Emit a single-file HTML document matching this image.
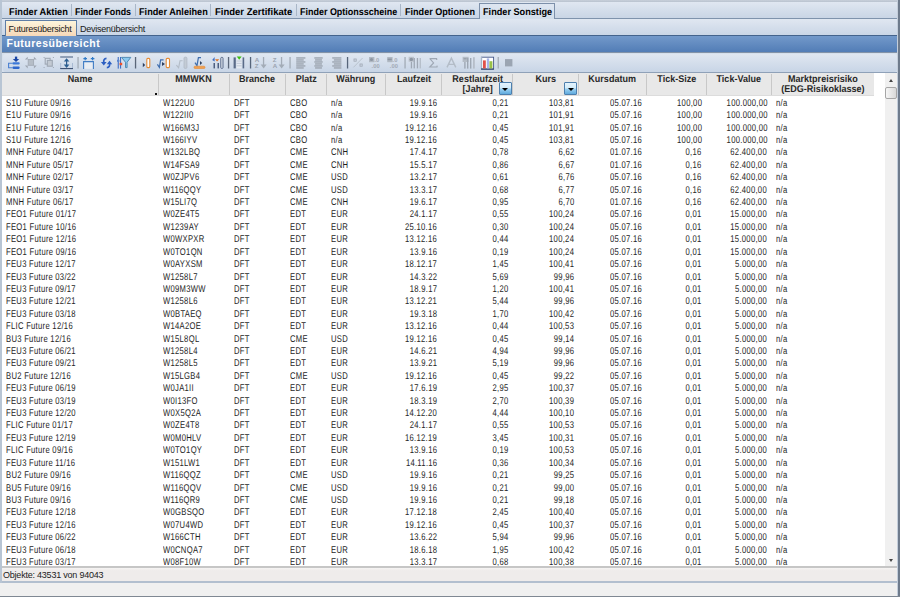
<!DOCTYPE html>
<html><head><meta charset="utf-8"><style>
*{margin:0;padding:0;box-sizing:border-box}
html,body{width:900px;height:597px;overflow:hidden;background:#f0f0f0;font-family:"Liberation Sans",sans-serif}
.a{position:absolute}
#top{position:absolute;left:0;top:0;width:900px;height:2px;background:linear-gradient(#c8d0da,#b9c3cf)}
#tabbar{position:absolute;left:0;top:2px;width:900px;height:17px;background:linear-gradient(#e0e7f1,#c9d5e5);border-bottom:1px solid #7f93ac}
.tt{position:absolute;top:7.3px;font-size:9.8px;font-weight:bold;color:#000;line-height:11px;white-space:nowrap;text-rendering:geometricPrecision;transform:scaleX(0.92);transform-origin:0 50%}
.tsep{position:absolute;top:4px;width:1px;height:12px;background:#a9b6c7}
#acttab{position:absolute;left:479px;top:3px;width:76px;height:16px;background:linear-gradient(#dee6f1,#d3deeb);border:1px solid #7d90aa;border-bottom:none}
#subbar{position:absolute;left:0;top:19px;width:900px;height:17px;background:linear-gradient(#e0e7f1,#cad6e6);border-bottom:1px solid #44638c}
#actsub{position:absolute;left:5px;top:20px;width:72px;height:16px;background:linear-gradient(#fdf5dc,#f7d8b8);border:1px solid #5f7ea6;border-bottom:none}
.st{position:absolute;top:23.8px;font-size:9px;line-height:11px;color:#202020;white-space:nowrap;letter-spacing:-0.25px}
#title{position:absolute;left:0;top:36px;width:900px;height:17px;background:linear-gradient(#7399ca,#527db6);border-bottom:1px solid #8393a8}
#titlet{position:absolute;left:6.5px;top:35.8px;font-size:10.5px;font-weight:bold;color:#fff;line-height:14px;letter-spacing:0.5px}
#tbar{position:absolute;left:0;top:53px;width:900px;height:20px;background:#d6e0ec;border-bottom:1px solid #8fa1b8}
#tpanel{position:absolute;left:3px;top:54px;width:894px;height:18px;border-radius:3px;background:linear-gradient(#e0e7f1,#c8d5e6)}
#hdr{position:absolute;left:2px;top:73px;width:871.5px;height:22.5px;background:#e8e8e8;border-bottom:1px solid #dcdcdc}
.h{position:absolute;top:75px;text-align:center;font-size:9.8px;font-weight:bold;line-height:10.2px;color:#282828;white-space:nowrap;text-rendering:geometricPrecision;transform:scaleX(0.92)}
.hs{position:absolute;top:74px;width:1px;height:21px;background:#c8c8c8}
#body{position:absolute;left:2px;top:73px;width:883px;height:493.5px;background:#fff}
.c{position:absolute;font-size:9.8px;line-height:12px;color:#1e1e1e;white-space:nowrap;letter-spacing:0.37px;text-rendering:geometricPrecision;transform:scaleX(0.78);transform-origin:0 50%}
.c.r{transform-origin:100% 50%}
.r{text-align:right}
#lb{position:absolute;left:0;top:0;width:2px;height:583px;background:#b8c5d4}
#rb{position:absolute;left:897px;top:0;width:3px;height:597px;background:linear-gradient(90deg,#c4cedb 0,#c4cedb 25%,#6e7b8c 45%,#6e7b8c 100%)}
#sb{position:absolute;left:885px;top:73px;width:12px;height:493px;background:#f0f0f0}
#thumb{position:absolute;left:885.2px;top:87.2px;width:11.6px;height:11.5px;border:1px solid #a6a6a6;border-radius:2px;background:linear-gradient(90deg,#f6f6f6,#d8d8d8)}
#tline{position:absolute;left:2px;top:566.4px;width:895px;height:1.8px;background:#c6c6c6}
#status{position:absolute;left:2px;top:568.2px;width:895px;height:15px;background:linear-gradient(#f6f4f3,#efeceb 20%);border-bottom:2px solid #b2bfcf}
#statt{position:absolute;left:3px;top:570px;font-size:9px;line-height:11px;color:#222;letter-spacing:-0.22px}
#bline{position:absolute;left:0;top:595.5px;width:900px;height:1.5px;background:#7f8893}
.dd{position:absolute;top:82px;width:12.8px;height:12.8px;border:1px solid #4d7fae;border-radius:1px;background:linear-gradient(#e4f3fc 0,#d3ebf9 45%,#9bd0f1 55%,#5faadd 100%)}
.dd:after{content:"";position:absolute;left:2.6px;top:4.6px;border-left:3px solid transparent;border-right:3px solid transparent;border-top:3.6px solid #000}
</style></head><body>
<div id="top"></div>
<div id="tabbar"></div>
<div class="tt" style="left:8.5px;transform:scaleX(0.945)">Finder Aktien</div><div class="tsep" style="left:70.8px"></div><div class="tt" style="left:75px;transform:scaleX(0.902)">Finder Fonds</div><div class="tsep" style="left:134.8px"></div><div class="tt" style="left:139px;transform:scaleX(0.934)">Finder Anleihen</div><div class="tsep" style="left:209.8px"></div><div class="tt" style="left:215px;transform:scaleX(0.971)">Finder Zertifikate</div><div class="tsep" style="left:295.5px"></div><div class="tt" style="left:299.5px;transform:scaleX(0.915)">Finder Optionsscheine</div><div class="tsep" style="left:400.4px"></div><div class="tt" style="left:404.5px;transform:scaleX(0.926)">Finder Optionen</div>
<div id="acttab"></div>
<div id="subbar"></div>
<div id="acttab2"></div>
<div class="tt" style="left:482.5px;transform:scaleX(0.934)">Finder Sonstige</div>
<div id="actsub"></div>
<div class="st" style="left:8.5px">Futuresübersicht</div>
<div class="st" style="left:80px">Devisenübersicht</div>
<div id="title"></div>
<div id="titlet">Futuresübersicht</div>
<div id="tbar"></div>
<div id="tpanel"></div>
<svg class="a" style="left:0;top:0" width="900" height="75" viewBox="0 0 900 75">
<rect x="14.9" y="56.6" width="2.3" height="2.6" fill="#1a47a6"/>
<path d="M12.8 59 L19.2 59 L16 62 Z" fill="#1a47a6"/>
<rect x="12.4" y="62.2" width="7.3" height="2.3" rx="1.1" fill="#3b78d8"/>
<rect x="12.4" y="66.6" width="7.3" height="2.3" rx="1.1" fill="#2d66cc"/>
<path d="M12.6 63.3 H8.6 V67.7 H12.6" fill="none" stroke="#4a7fd0" stroke-width="1.1"/>

<rect x="28.2" y="59.5" width="5.4" height="5.8" fill="#b5bdc7" stroke="#a3abb6" stroke-width="0.9"/>
<path d="M24.9 59.6 L27.7 56.8 L27.7 59.6 Z M36.7 59.6 L33.9 56.8 L33.9 59.6 Z M24.9 65.6 L27.7 68.4 L27.7 65.6 Z M36.7 65.6 L33.9 68.4 L33.9 65.6 Z" fill="#9ea6b1"/>

<rect x="45.2" y="58.3" width="4.9" height="5.8" fill="none" stroke="#9ea7b3" stroke-width="1.1"/>
<rect x="47.3" y="60.4" width="5" height="5.8" fill="#c3cad3" stroke="#9ea7b3" stroke-width="1.1"/>
<rect x="43.6" y="57" width="1" height="1" fill="#9ea7b3"/><rect x="52.9" y="57" width="1" height="1" fill="#9ea7b3"/>
<rect x="43.6" y="67" width="1" height="1" fill="#9ea7b3"/><rect x="52.9" y="67" width="1" height="1" fill="#9ea7b3"/>

<rect x="60.2" y="56.1" width="12.8" height="1.8" fill="#8797b0"/>
<path d="M60.7 63 V68.6 H72.5 V63" fill="none" stroke="#a9bad3" stroke-width="1"/>
<rect x="60.2" y="68" width="12.8" height="1.1" fill="#3f5274"/>
<rect x="66" y="60" width="1.2" height="6" fill="#2f5b8c"/>
<path d="M63.8 61.6 L66.6 58.2 L69.4 61.6 Z M63.8 64.6 L66.6 68 L69.4 64.6 Z" fill="#2c5f92"/>
<rect x="77.4" y="57" width="1.3" height="11.5" fill="#a2abb6"/>
<rect x="83.6" y="61.6" width="9.8" height="7.2" fill="#e9edf3"/><path d="M83.6 69 V61.6 H93.4 V69" fill="none" stroke="#3f7cc4" stroke-width="1.1"/>
<path d="M83.4 58.6 H87 M85.2 57 V60.2 M90.8 58.6 H94.4 M92.6 57 V60.2" stroke="#2f7ac8" stroke-width="1.2"/>

<path d="M106.5 58.3 C104.2 58.5 103.4 60.2 103.8 62.5" fill="none" stroke="#2c5fc2" stroke-width="1.7"/>
<path d="M100.9 62 L106.6 62 L103.8 65.4 Z" fill="#2c5fc2"/>
<path d="M106.8 67.6 C109.2 67.4 110 65.6 109.6 63.5" fill="none" stroke="#2c5fc2" stroke-width="1.7"/>
<path d="M106.8 64.2 L112.2 64.2 L109.6 60.8 Z" fill="#2c5fc2"/>

<rect x="117.7" y="57" width="1.1" height="11.6" fill="#3f6fc4"/>
<rect x="120" y="57" width="1.1" height="11.6" fill="#3f6fc4"/>
<rect x="117" y="59.8" width="2.4" height="2" fill="#5a86d0"/>
<rect x="119.6" y="62.8" width="2.6" height="2.4" fill="#f0502a"/>
<path d="M121.5 57.4 H130.8 L127.1 62.2 V67.6 H125.5 V62.2 Z" fill="#8ccaf0" stroke="#4a86b0" stroke-width="0.9"/>
<rect x="134.9" y="57" width="1.3" height="11.5" fill="#5a6678"/>
<path d="M142.8 62.8 L145.2 65 L142.8 67.2 Z" fill="#2e3f5e"/>
<rect x="146.8" y="58.4" width="3" height="9.2" rx="1" fill="#fff" stroke="#e58c36" stroke-width="1.1"/>

<path d="M157.4 64.4 L159.4 67.4 L160.6 59.8 H163.6" fill="none" stroke="#3f6eae" stroke-width="1.2"/>
<path d="M162 62 L165 64 L162 66 Z" fill="#2e3f5e"/>
<rect x="166.2" y="58.4" width="3.3" height="9.2" rx="1" fill="#fff" stroke="#e58c36" stroke-width="1.1"/>

<path d="M176.4 65.2 L178.6 67.8 L180 60.8 H182.6" fill="none" stroke="#b3bcc7" stroke-width="1.1"/>
<rect x="184" y="57.2" width="2.9" height="11.2" rx="1" fill="#c3cbd5" stroke="#b0b9c5" stroke-width="0.8"/>

<path d="M195 62.6 L197 65.6 L198.4 57.6 H201" fill="none" stroke="#3f6eae" stroke-width="1.2"/>
<path d="M200 61 L202.2 63 L200 65 Z" fill="#2e3f5e"/>
<rect x="194" y="66.2" width="11" height="2.3" rx="1" fill="#f0a050" stroke="#e58c36" stroke-width="0.6"/>

<rect x="213.5" y="63" width="1.5" height="5.4" fill="#4d5f80"/>
<rect x="217.5" y="63" width="1.5" height="5.4" fill="#4d5f80"/>
<rect x="220.8" y="57.4" width="2.2" height="11" rx="0.8" fill="#dfe5ee" stroke="#4d5f80" stroke-width="0.9"/>
<path d="M212.2 60 L214.6 57 L214.6 61.4 Z" fill="#3f6fc4"/>
<path d="M215 59.2 H219.2 L217.1 61.4 Z" fill="#e07020"/>
<rect x="227.9" y="57" width="1.3" height="11.5" fill="#5a6678"/>
<rect x="233.6" y="57.4" width="2.2" height="11" fill="#5a6b88"/>
<rect x="236.6" y="58" width="5" height="10.4" fill="#e6ebf2"/>
<path d="M236.6 61 H241.6 M236.6 63.4 H241.6 M236.6 65.8 H241.6" stroke="#b7c2d0" stroke-width="0.8"/>
<rect x="242.6" y="57.4" width="1.6" height="11" fill="#5a6b88"/>
<path d="M236.8 56.4 H241.6 L239.2 59.8 Z" fill="#3cc010"/>
<rect x="249.9" y="57" width="1.3" height="11.5" fill="#56657a"/>
<text x="254.8" y="61.8" font-family="Liberation Sans" font-size="6.2" font-weight="bold" fill="#9aa3ae">A</text>
<text x="254.8" y="68" font-family="Liberation Sans" font-size="6.2" font-weight="bold" fill="#9aa3ae">Z</text>
<rect x="262.9" y="57" width="1.3" height="9" fill="#a3acb7"/>
<path d="M260.6 64.6 H266.6 L263.6 68.4 Z" fill="#a3acb7"/>

<text x="272.8" y="61.8" font-family="Liberation Sans" font-size="6.2" font-weight="bold" fill="#9aa3ae">Z</text>
<text x="272.8" y="68" font-family="Liberation Sans" font-size="6.2" font-weight="bold" fill="#9aa3ae">A</text>
<rect x="280.9" y="57" width="1.3" height="9" fill="#a3acb7"/>
<path d="M278.6 64.6 H284.6 L281.6 68.4 Z" fill="#a3acb7"/>
<rect x="289.4" y="57" width="1.3" height="11.5" fill="#a2abb6"/><rect x="296.20" y="57.2" width="9.20" height="1.5" fill="#a0a9b4"/><rect x="296.20" y="59.2" width="7.54" height="1.5" fill="#a0a9b4"/><rect x="296.20" y="61.2" width="9.20" height="1.5" fill="#a0a9b4"/><rect x="296.20" y="63.2" width="7.54" height="1.5" fill="#a0a9b4"/><rect x="296.20" y="65.2" width="9.20" height="1.5" fill="#a0a9b4"/><rect x="296.20" y="67.2" width="7.54" height="1.5" fill="#a0a9b4"/><rect x="314.30" y="57.2" width="8.40" height="1.5" fill="#a0a9b4"/><rect x="315.06" y="59.2" width="6.89" height="1.5" fill="#a0a9b4"/><rect x="314.30" y="61.2" width="8.40" height="1.5" fill="#a0a9b4"/><rect x="315.06" y="63.2" width="6.89" height="1.5" fill="#a0a9b4"/><rect x="314.30" y="65.2" width="8.40" height="1.5" fill="#a0a9b4"/><rect x="315.06" y="67.2" width="6.89" height="1.5" fill="#a0a9b4"/><rect x="332.20" y="57.2" width="9.20" height="1.5" fill="#a0a9b4"/><rect x="333.86" y="59.2" width="7.54" height="1.5" fill="#a0a9b4"/><rect x="332.20" y="61.2" width="9.20" height="1.5" fill="#a0a9b4"/><rect x="333.86" y="63.2" width="7.54" height="1.5" fill="#a0a9b4"/><rect x="332.20" y="65.2" width="9.20" height="1.5" fill="#a0a9b4"/><rect x="333.86" y="67.2" width="7.54" height="1.5" fill="#a0a9b4"/><rect x="346.9" y="57" width="1.3" height="11.5" fill="#56657a"/>
<rect x="354" y="59" width="2.2" height="2.2" fill="none" stroke="#9ea7b3" stroke-width="0.8"/>
<rect x="360" y="64" width="2.2" height="2.2" fill="none" stroke="#9ea7b3" stroke-width="0.8"/>
<path d="M353.4 67.4 L362.6 58" stroke="#b3bcc7" stroke-width="0.8"/>

<rect x="369" y="57" width="5.4" height="5.2" fill="#b0b8c2"/>
<circle cx="371.5" cy="59.5" r="1.6" fill="#8e97a3"/>
<text x="374.4" y="62.2" font-family="Liberation Sans" font-size="5.8" font-weight="bold" fill="#a3abb6">.0</text>
<text x="371.6" y="68.4" font-family="Liberation Sans" font-size="5.8" font-weight="bold" fill="#a3abb6">.00</text>

<rect x="387.2" y="57" width="5.4" height="5.2" fill="#b0b8c2"/>
<rect x="387.6" y="58.6" width="4.2" height="1.6" fill="#8e97a3"/>
<text x="392.59999999999997" y="62.2" font-family="Liberation Sans" font-size="5.8" font-weight="bold" fill="#a3abb6">.0</text>
<text x="389.8" y="68.4" font-family="Liberation Sans" font-size="5.8" font-weight="bold" fill="#a3abb6">.00</text>
<rect x="404.4" y="57" width="1.3" height="11.5" fill="#a2abb6"/>
<rect x="408.6" y="56.8" width="5.4" height="5" fill="#bdc4cd"/>
<circle cx="411.3" cy="59.5" r="1.8" fill="#8e97a3"/>
<rect x="410.8" y="62" width="1.3" height="6.4" fill="#9ea7b3"/>
<rect x="413.6" y="58" width="1.3" height="10.4" fill="#9ea7b3"/>
<rect x="416.8" y="58" width="1.3" height="10.4" fill="#9ea7b3"/>
<rect x="419.6" y="58" width="1.3" height="10.4" fill="#b3bcc7"/>
<path d="M429.6 58.6 H436.6 L436.8 60 M429.8 58.6 L433.6 63 L429.8 67 H437 L437.2 65.6" fill="none" stroke="#9ea7b3" stroke-width="1.1"/><path d="M447 67.4 L451.4 58.2 L455.8 67.4 M448.8 64.4 H454" fill="none" stroke="#b3bcc7" stroke-width="1.4"/>
<rect x="462.6" y="56.8" width="6" height="5.2" fill="#b4bcc6"/>
<rect x="463.6" y="58" width="3" height="1.4" fill="#9aa3ae"/>
<rect x="464.2" y="62" width="1.4" height="6.6" fill="#9ea7b3"/>
<rect x="467" y="58" width="1.4" height="10.6" fill="#9ea7b3"/>
<rect x="470" y="58" width="1.4" height="10.6" fill="#9ea7b3"/>
<rect x="473" y="57.2" width="1.8" height="11.4" fill="#b6bec9"/>

<rect x="481.4" y="57.2" width="12.2" height="12" fill="#fff" stroke="#46598a" stroke-width="0.9"/>
<rect x="481" y="57" width="1.2" height="12.4" fill="#a7b4c8"/>
<rect x="481" y="68.4" width="12.8" height="1.2" fill="#33466e"/>
<rect x="483" y="60.4" width="2.8" height="8" fill="#e0504a"/>
<rect x="486.8" y="58.4" width="2.4" height="10" fill="#a8b4e8"/>
<rect x="489.4" y="61.2" width="3" height="7.2" fill="#98c048"/>
<rect x="497.59999999999997" y="57" width="1.3" height="11.5" fill="#a2abb6"/><rect x="505" y="59.1" width="7.4" height="7.3" fill="#9ba5b2"/></svg>
<div id="body"></div>
<div id="hdr"></div>
<div class="h" style="left:2px;width:156.3px">Name</div><div class="h" style="left:158.3px;width:71.1px">MMWKN</div><div class="hs" style="left:157.8px"></div><div class="h" style="left:229.4px;width:56.2px">Branche</div><div class="hs" style="left:228.9px"></div><div class="h" style="left:285.6px;width:40.6px">Platz</div><div class="hs" style="left:285.1px"></div><div class="h" style="left:326.2px;width:59.4px">Währung</div><div class="hs" style="left:325.7px"></div><div class="h" style="left:385.6px;width:56px">Laufzeit</div><div class="hs" style="left:385.1px"></div><div class="h" style="left:441.6px;width:71.3px">Restlaufzeit<br>[Jahre]</div><div class="hs" style="left:441.1px"></div><div class="h" style="left:512.9px;width:65.5px">Kurs</div><div class="hs" style="left:512.4px"></div><div class="h" style="left:578.4px;width:68.3px">Kursdatum</div><div class="hs" style="left:577.9px"></div><div class="h" style="left:646.7px;width:59.5px">Tick-Size</div><div class="hs" style="left:646.2px"></div><div class="h" style="left:706.2px;width:65.5px">Tick-Value</div><div class="hs" style="left:705.7px"></div><div class="h" style="left:771.7px;width:101.8px">Marktpreisrisiko<br>(EDG-Risikoklasse)</div><div class="hs" style="left:771.2px"></div>
<div class="dd" style="left:498.9px"></div>
<div class="dd" style="left:564.2px"></div>
<div class="a" style="left:155.2px;top:92.6px;width:2.2px;height:2.2px;background:#111"></div>
<div class="c" style="top:97.7px;left:5.8px">S1U Future 09/16</div><div class="c" style="top:97.7px;left:163.1px">W122U0</div><div class="c" style="top:97.7px;left:234px">DFT</div><div class="c" style="top:97.7px;left:289.9px">CBO</div><div class="c" style="top:97.7px;left:330.8px">n/a</div><div class="c r" style="top:97.7px;right:462.7px">19.9.16</div><div class="c r" style="top:97.7px;right:391.4px">0,21</div><div class="c r" style="top:97.7px;right:325.9px">103,81</div><div class="c r" style="top:97.7px;right:257.6px">05.07.16</div><div class="c r" style="top:97.7px;right:198.1px">100,00</div><div class="c r" style="top:97.7px;right:132.6px">100.000,00</div><div class="c" style="top:97.7px;left:775.8px">n/a</div><div class="c" style="top:110.12px;left:5.8px">E1U Future 09/16</div><div class="c" style="top:110.12px;left:163.1px">W122II0</div><div class="c" style="top:110.12px;left:234px">DFT</div><div class="c" style="top:110.12px;left:289.9px">CBO</div><div class="c" style="top:110.12px;left:330.8px">n/a</div><div class="c r" style="top:110.12px;right:462.7px">19.9.16</div><div class="c r" style="top:110.12px;right:391.4px">0,21</div><div class="c r" style="top:110.12px;right:325.9px">101,91</div><div class="c r" style="top:110.12px;right:257.6px">05.07.16</div><div class="c r" style="top:110.12px;right:198.1px">100,00</div><div class="c r" style="top:110.12px;right:132.6px">100.000,00</div><div class="c" style="top:110.12px;left:775.8px">n/a</div><div class="c" style="top:122.53px;left:5.8px">E1U Future 12/16</div><div class="c" style="top:122.53px;left:163.1px">W166M3J</div><div class="c" style="top:122.53px;left:234px">DFT</div><div class="c" style="top:122.53px;left:289.9px">CBO</div><div class="c" style="top:122.53px;left:330.8px">n/a</div><div class="c r" style="top:122.53px;right:462.7px">19.12.16</div><div class="c r" style="top:122.53px;right:391.4px">0,45</div><div class="c r" style="top:122.53px;right:325.9px">101,91</div><div class="c r" style="top:122.53px;right:257.6px">05.07.16</div><div class="c r" style="top:122.53px;right:198.1px">100,00</div><div class="c r" style="top:122.53px;right:132.6px">100.000,00</div><div class="c" style="top:122.53px;left:775.8px">n/a</div><div class="c" style="top:134.94px;left:5.8px">S1U Future 12/16</div><div class="c" style="top:134.94px;left:163.1px">W166IYV</div><div class="c" style="top:134.94px;left:234px">DFT</div><div class="c" style="top:134.94px;left:289.9px">CBO</div><div class="c" style="top:134.94px;left:330.8px">n/a</div><div class="c r" style="top:134.94px;right:462.7px">19.12.16</div><div class="c r" style="top:134.94px;right:391.4px">0,45</div><div class="c r" style="top:134.94px;right:325.9px">103,81</div><div class="c r" style="top:134.94px;right:257.6px">05.07.16</div><div class="c r" style="top:134.94px;right:198.1px">100,00</div><div class="c r" style="top:134.94px;right:132.6px">100.000,00</div><div class="c" style="top:134.94px;left:775.8px">n/a</div><div class="c" style="top:147.36px;left:5.8px">MNH Future 04/17</div><div class="c" style="top:147.36px;left:163.1px">W132LBQ</div><div class="c" style="top:147.36px;left:234px">DFT</div><div class="c" style="top:147.36px;left:289.9px">CME</div><div class="c" style="top:147.36px;left:330.8px">CNH</div><div class="c r" style="top:147.36px;right:462.7px">17.4.17</div><div class="c r" style="top:147.36px;right:391.4px">0,78</div><div class="c r" style="top:147.36px;right:325.9px">6,62</div><div class="c r" style="top:147.36px;right:257.6px">01.07.16</div><div class="c r" style="top:147.36px;right:198.1px">0,16</div><div class="c r" style="top:147.36px;right:132.6px">62.400,00</div><div class="c" style="top:147.36px;left:775.8px">n/a</div><div class="c" style="top:159.78px;left:5.8px">MNH Future 05/17</div><div class="c" style="top:159.78px;left:163.1px">W14FSA9</div><div class="c" style="top:159.78px;left:234px">DFT</div><div class="c" style="top:159.78px;left:289.9px">CME</div><div class="c" style="top:159.78px;left:330.8px">CNH</div><div class="c r" style="top:159.78px;right:462.7px">15.5.17</div><div class="c r" style="top:159.78px;right:391.4px">0,86</div><div class="c r" style="top:159.78px;right:325.9px">6,67</div><div class="c r" style="top:159.78px;right:257.6px">01.07.16</div><div class="c r" style="top:159.78px;right:198.1px">0,16</div><div class="c r" style="top:159.78px;right:132.6px">62.400,00</div><div class="c" style="top:159.78px;left:775.8px">n/a</div><div class="c" style="top:172.19px;left:5.8px">MNH Future 02/17</div><div class="c" style="top:172.19px;left:163.1px">W0ZJPV6</div><div class="c" style="top:172.19px;left:234px">DFT</div><div class="c" style="top:172.19px;left:289.9px">CME</div><div class="c" style="top:172.19px;left:330.8px">USD</div><div class="c r" style="top:172.19px;right:462.7px">13.2.17</div><div class="c r" style="top:172.19px;right:391.4px">0,61</div><div class="c r" style="top:172.19px;right:325.9px">6,76</div><div class="c r" style="top:172.19px;right:257.6px">05.07.16</div><div class="c r" style="top:172.19px;right:198.1px">0,16</div><div class="c r" style="top:172.19px;right:132.6px">62.400,00</div><div class="c" style="top:172.19px;left:775.8px">n/a</div><div class="c" style="top:184.61px;left:5.8px">MNH Future 03/17</div><div class="c" style="top:184.61px;left:163.1px">W116QQY</div><div class="c" style="top:184.61px;left:234px">DFT</div><div class="c" style="top:184.61px;left:289.9px">CME</div><div class="c" style="top:184.61px;left:330.8px">USD</div><div class="c r" style="top:184.61px;right:462.7px">13.3.17</div><div class="c r" style="top:184.61px;right:391.4px">0,68</div><div class="c r" style="top:184.61px;right:325.9px">6,77</div><div class="c r" style="top:184.61px;right:257.6px">05.07.16</div><div class="c r" style="top:184.61px;right:198.1px">0,16</div><div class="c r" style="top:184.61px;right:132.6px">62.400,00</div><div class="c" style="top:184.61px;left:775.8px">n/a</div><div class="c" style="top:197.02px;left:5.8px">MNH Future 06/17</div><div class="c" style="top:197.02px;left:163.1px">W15LI7Q</div><div class="c" style="top:197.02px;left:234px">DFT</div><div class="c" style="top:197.02px;left:289.9px">CME</div><div class="c" style="top:197.02px;left:330.8px">CNH</div><div class="c r" style="top:197.02px;right:462.7px">19.6.17</div><div class="c r" style="top:197.02px;right:391.4px">0,95</div><div class="c r" style="top:197.02px;right:325.9px">6,70</div><div class="c r" style="top:197.02px;right:257.6px">01.07.16</div><div class="c r" style="top:197.02px;right:198.1px">0,16</div><div class="c r" style="top:197.02px;right:132.6px">62.400,00</div><div class="c" style="top:197.02px;left:775.8px">n/a</div><div class="c" style="top:209.44px;left:5.8px">FEO1 Future 01/17</div><div class="c" style="top:209.44px;left:163.1px">W0ZE4T5</div><div class="c" style="top:209.44px;left:234px">DFT</div><div class="c" style="top:209.44px;left:289.9px">EDT</div><div class="c" style="top:209.44px;left:330.8px">EUR</div><div class="c r" style="top:209.44px;right:462.7px">24.1.17</div><div class="c r" style="top:209.44px;right:391.4px">0,55</div><div class="c r" style="top:209.44px;right:325.9px">100,24</div><div class="c r" style="top:209.44px;right:257.6px">05.07.16</div><div class="c r" style="top:209.44px;right:198.1px">0,01</div><div class="c r" style="top:209.44px;right:132.6px">15.000,00</div><div class="c" style="top:209.44px;left:775.8px">n/a</div><div class="c" style="top:221.85px;left:5.8px">FEO1 Future 10/16</div><div class="c" style="top:221.85px;left:163.1px">W1239AY</div><div class="c" style="top:221.85px;left:234px">DFT</div><div class="c" style="top:221.85px;left:289.9px">EDT</div><div class="c" style="top:221.85px;left:330.8px">EUR</div><div class="c r" style="top:221.85px;right:462.7px">25.10.16</div><div class="c r" style="top:221.85px;right:391.4px">0,30</div><div class="c r" style="top:221.85px;right:325.9px">100,24</div><div class="c r" style="top:221.85px;right:257.6px">05.07.16</div><div class="c r" style="top:221.85px;right:198.1px">0,01</div><div class="c r" style="top:221.85px;right:132.6px">15.000,00</div><div class="c" style="top:221.85px;left:775.8px">n/a</div><div class="c" style="top:234.26px;left:5.8px">FEO1 Future 12/16</div><div class="c" style="top:234.26px;left:163.1px">W0WXPXR</div><div class="c" style="top:234.26px;left:234px">DFT</div><div class="c" style="top:234.26px;left:289.9px">EDT</div><div class="c" style="top:234.26px;left:330.8px">EUR</div><div class="c r" style="top:234.26px;right:462.7px">13.12.16</div><div class="c r" style="top:234.26px;right:391.4px">0,44</div><div class="c r" style="top:234.26px;right:325.9px">100,24</div><div class="c r" style="top:234.26px;right:257.6px">05.07.16</div><div class="c r" style="top:234.26px;right:198.1px">0,01</div><div class="c r" style="top:234.26px;right:132.6px">15.000,00</div><div class="c" style="top:234.26px;left:775.8px">n/a</div><div class="c" style="top:246.68px;left:5.8px">FEO1 Future 09/16</div><div class="c" style="top:246.68px;left:163.1px">W0TO1QN</div><div class="c" style="top:246.68px;left:234px">DFT</div><div class="c" style="top:246.68px;left:289.9px">EDT</div><div class="c" style="top:246.68px;left:330.8px">EUR</div><div class="c r" style="top:246.68px;right:462.7px">13.9.16</div><div class="c r" style="top:246.68px;right:391.4px">0,19</div><div class="c r" style="top:246.68px;right:325.9px">100,24</div><div class="c r" style="top:246.68px;right:257.6px">05.07.16</div><div class="c r" style="top:246.68px;right:198.1px">0,01</div><div class="c r" style="top:246.68px;right:132.6px">15.000,00</div><div class="c" style="top:246.68px;left:775.8px">n/a</div><div class="c" style="top:259.09px;left:5.8px">FEU3 Future 12/17</div><div class="c" style="top:259.09px;left:163.1px">W0AYXSM</div><div class="c" style="top:259.09px;left:234px">DFT</div><div class="c" style="top:259.09px;left:289.9px">EDT</div><div class="c" style="top:259.09px;left:330.8px">EUR</div><div class="c r" style="top:259.09px;right:462.7px">18.12.17</div><div class="c r" style="top:259.09px;right:391.4px">1,45</div><div class="c r" style="top:259.09px;right:325.9px">100,41</div><div class="c r" style="top:259.09px;right:257.6px">05.07.16</div><div class="c r" style="top:259.09px;right:198.1px">0,01</div><div class="c r" style="top:259.09px;right:132.6px">5.000,00</div><div class="c" style="top:259.09px;left:775.8px">n/a</div><div class="c" style="top:271.51px;left:5.8px">FEU3 Future 03/22</div><div class="c" style="top:271.51px;left:163.1px">W1258L7</div><div class="c" style="top:271.51px;left:234px">DFT</div><div class="c" style="top:271.51px;left:289.9px">EDT</div><div class="c" style="top:271.51px;left:330.8px">EUR</div><div class="c r" style="top:271.51px;right:462.7px">14.3.22</div><div class="c r" style="top:271.51px;right:391.4px">5,69</div><div class="c r" style="top:271.51px;right:325.9px">99,96</div><div class="c r" style="top:271.51px;right:257.6px">05.07.16</div><div class="c r" style="top:271.51px;right:198.1px">0,01</div><div class="c r" style="top:271.51px;right:132.6px">5.000,00</div><div class="c" style="top:271.51px;left:775.8px">n/a</div><div class="c" style="top:283.93px;left:5.8px">FEU3 Future 09/17</div><div class="c" style="top:283.93px;left:163.1px">W09M3WW</div><div class="c" style="top:283.93px;left:234px">DFT</div><div class="c" style="top:283.93px;left:289.9px">EDT</div><div class="c" style="top:283.93px;left:330.8px">EUR</div><div class="c r" style="top:283.93px;right:462.7px">18.9.17</div><div class="c r" style="top:283.93px;right:391.4px">1,20</div><div class="c r" style="top:283.93px;right:325.9px">100,41</div><div class="c r" style="top:283.93px;right:257.6px">05.07.16</div><div class="c r" style="top:283.93px;right:198.1px">0,01</div><div class="c r" style="top:283.93px;right:132.6px">5.000,00</div><div class="c" style="top:283.93px;left:775.8px">n/a</div><div class="c" style="top:296.34px;left:5.8px">FEU3 Future 12/21</div><div class="c" style="top:296.34px;left:163.1px">W1258L6</div><div class="c" style="top:296.34px;left:234px">DFT</div><div class="c" style="top:296.34px;left:289.9px">EDT</div><div class="c" style="top:296.34px;left:330.8px">EUR</div><div class="c r" style="top:296.34px;right:462.7px">13.12.21</div><div class="c r" style="top:296.34px;right:391.4px">5,44</div><div class="c r" style="top:296.34px;right:325.9px">99,96</div><div class="c r" style="top:296.34px;right:257.6px">05.07.16</div><div class="c r" style="top:296.34px;right:198.1px">0,01</div><div class="c r" style="top:296.34px;right:132.6px">5.000,00</div><div class="c" style="top:296.34px;left:775.8px">n/a</div><div class="c" style="top:308.75px;left:5.8px">FEU3 Future 03/18</div><div class="c" style="top:308.75px;left:163.1px">W0BTAEQ</div><div class="c" style="top:308.75px;left:234px">DFT</div><div class="c" style="top:308.75px;left:289.9px">EDT</div><div class="c" style="top:308.75px;left:330.8px">EUR</div><div class="c r" style="top:308.75px;right:462.7px">19.3.18</div><div class="c r" style="top:308.75px;right:391.4px">1,70</div><div class="c r" style="top:308.75px;right:325.9px">100,42</div><div class="c r" style="top:308.75px;right:257.6px">05.07.16</div><div class="c r" style="top:308.75px;right:198.1px">0,01</div><div class="c r" style="top:308.75px;right:132.6px">5.000,00</div><div class="c" style="top:308.75px;left:775.8px">n/a</div><div class="c" style="top:321.17px;left:5.8px">FLIC Future 12/16</div><div class="c" style="top:321.17px;left:163.1px">W14A2OE</div><div class="c" style="top:321.17px;left:234px">DFT</div><div class="c" style="top:321.17px;left:289.9px">EDT</div><div class="c" style="top:321.17px;left:330.8px">EUR</div><div class="c r" style="top:321.17px;right:462.7px">13.12.16</div><div class="c r" style="top:321.17px;right:391.4px">0,44</div><div class="c r" style="top:321.17px;right:325.9px">100,53</div><div class="c r" style="top:321.17px;right:257.6px">05.07.16</div><div class="c r" style="top:321.17px;right:198.1px">0,01</div><div class="c r" style="top:321.17px;right:132.6px">5.000,00</div><div class="c" style="top:321.17px;left:775.8px">n/a</div><div class="c" style="top:333.58px;left:5.8px">BU3 Future 12/16</div><div class="c" style="top:333.58px;left:163.1px">W15L8QL</div><div class="c" style="top:333.58px;left:234px">DFT</div><div class="c" style="top:333.58px;left:289.9px">CME</div><div class="c" style="top:333.58px;left:330.8px">USD</div><div class="c r" style="top:333.58px;right:462.7px">19.12.16</div><div class="c r" style="top:333.58px;right:391.4px">0,45</div><div class="c r" style="top:333.58px;right:325.9px">99,14</div><div class="c r" style="top:333.58px;right:257.6px">05.07.16</div><div class="c r" style="top:333.58px;right:198.1px">0,01</div><div class="c r" style="top:333.58px;right:132.6px">5.000,00</div><div class="c" style="top:333.58px;left:775.8px">n/a</div><div class="c" style="top:346px;left:5.8px">FEU3 Future 06/21</div><div class="c" style="top:346px;left:163.1px">W1258L4</div><div class="c" style="top:346px;left:234px">DFT</div><div class="c" style="top:346px;left:289.9px">EDT</div><div class="c" style="top:346px;left:330.8px">EUR</div><div class="c r" style="top:346px;right:462.7px">14.6.21</div><div class="c r" style="top:346px;right:391.4px">4,94</div><div class="c r" style="top:346px;right:325.9px">99,96</div><div class="c r" style="top:346px;right:257.6px">05.07.16</div><div class="c r" style="top:346px;right:198.1px">0,01</div><div class="c r" style="top:346px;right:132.6px">5.000,00</div><div class="c" style="top:346px;left:775.8px">n/a</div><div class="c" style="top:358.41px;left:5.8px">FEU3 Future 09/21</div><div class="c" style="top:358.41px;left:163.1px">W1258L5</div><div class="c" style="top:358.41px;left:234px">DFT</div><div class="c" style="top:358.41px;left:289.9px">EDT</div><div class="c" style="top:358.41px;left:330.8px">EUR</div><div class="c r" style="top:358.41px;right:462.7px">13.9.21</div><div class="c r" style="top:358.41px;right:391.4px">5,19</div><div class="c r" style="top:358.41px;right:325.9px">99,96</div><div class="c r" style="top:358.41px;right:257.6px">05.07.16</div><div class="c r" style="top:358.41px;right:198.1px">0,01</div><div class="c r" style="top:358.41px;right:132.6px">5.000,00</div><div class="c" style="top:358.41px;left:775.8px">n/a</div><div class="c" style="top:370.83px;left:5.8px">BU2 Future 12/16</div><div class="c" style="top:370.83px;left:163.1px">W15LGB4</div><div class="c" style="top:370.83px;left:234px">DFT</div><div class="c" style="top:370.83px;left:289.9px">CME</div><div class="c" style="top:370.83px;left:330.8px">USD</div><div class="c r" style="top:370.83px;right:462.7px">19.12.16</div><div class="c r" style="top:370.83px;right:391.4px">0,45</div><div class="c r" style="top:370.83px;right:325.9px">99,22</div><div class="c r" style="top:370.83px;right:257.6px">05.07.16</div><div class="c r" style="top:370.83px;right:198.1px">0,01</div><div class="c r" style="top:370.83px;right:132.6px">5.000,00</div><div class="c" style="top:370.83px;left:775.8px">n/a</div><div class="c" style="top:383.24px;left:5.8px">FEU3 Future 06/19</div><div class="c" style="top:383.24px;left:163.1px">W0JA1II</div><div class="c" style="top:383.24px;left:234px">DFT</div><div class="c" style="top:383.24px;left:289.9px">EDT</div><div class="c" style="top:383.24px;left:330.8px">EUR</div><div class="c r" style="top:383.24px;right:462.7px">17.6.19</div><div class="c r" style="top:383.24px;right:391.4px">2,95</div><div class="c r" style="top:383.24px;right:325.9px">100,37</div><div class="c r" style="top:383.24px;right:257.6px">05.07.16</div><div class="c r" style="top:383.24px;right:198.1px">0,01</div><div class="c r" style="top:383.24px;right:132.6px">5.000,00</div><div class="c" style="top:383.24px;left:775.8px">n/a</div><div class="c" style="top:395.66px;left:5.8px">FEU3 Future 03/19</div><div class="c" style="top:395.66px;left:163.1px">W0I13FO</div><div class="c" style="top:395.66px;left:234px">DFT</div><div class="c" style="top:395.66px;left:289.9px">EDT</div><div class="c" style="top:395.66px;left:330.8px">EUR</div><div class="c r" style="top:395.66px;right:462.7px">18.3.19</div><div class="c r" style="top:395.66px;right:391.4px">2,70</div><div class="c r" style="top:395.66px;right:325.9px">100,39</div><div class="c r" style="top:395.66px;right:257.6px">05.07.16</div><div class="c r" style="top:395.66px;right:198.1px">0,01</div><div class="c r" style="top:395.66px;right:132.6px">5.000,00</div><div class="c" style="top:395.66px;left:775.8px">n/a</div><div class="c" style="top:408.07px;left:5.8px">FEU3 Future 12/20</div><div class="c" style="top:408.07px;left:163.1px">W0X5Q2A</div><div class="c" style="top:408.07px;left:234px">DFT</div><div class="c" style="top:408.07px;left:289.9px">EDT</div><div class="c" style="top:408.07px;left:330.8px">EUR</div><div class="c r" style="top:408.07px;right:462.7px">14.12.20</div><div class="c r" style="top:408.07px;right:391.4px">4,44</div><div class="c r" style="top:408.07px;right:325.9px">100,10</div><div class="c r" style="top:408.07px;right:257.6px">05.07.16</div><div class="c r" style="top:408.07px;right:198.1px">0,01</div><div class="c r" style="top:408.07px;right:132.6px">5.000,00</div><div class="c" style="top:408.07px;left:775.8px">n/a</div><div class="c" style="top:420.49px;left:5.8px">FLIC Future 01/17</div><div class="c" style="top:420.49px;left:163.1px">W0ZE4T8</div><div class="c" style="top:420.49px;left:234px">DFT</div><div class="c" style="top:420.49px;left:289.9px">EDT</div><div class="c" style="top:420.49px;left:330.8px">EUR</div><div class="c r" style="top:420.49px;right:462.7px">24.1.17</div><div class="c r" style="top:420.49px;right:391.4px">0,55</div><div class="c r" style="top:420.49px;right:325.9px">100,53</div><div class="c r" style="top:420.49px;right:257.6px">05.07.16</div><div class="c r" style="top:420.49px;right:198.1px">0,01</div><div class="c r" style="top:420.49px;right:132.6px">5.000,00</div><div class="c" style="top:420.49px;left:775.8px">n/a</div><div class="c" style="top:432.9px;left:5.8px">FEU3 Future 12/19</div><div class="c" style="top:432.9px;left:163.1px">W0M0HLV</div><div class="c" style="top:432.9px;left:234px">DFT</div><div class="c" style="top:432.9px;left:289.9px">EDT</div><div class="c" style="top:432.9px;left:330.8px">EUR</div><div class="c r" style="top:432.9px;right:462.7px">16.12.19</div><div class="c r" style="top:432.9px;right:391.4px">3,45</div><div class="c r" style="top:432.9px;right:325.9px">100,31</div><div class="c r" style="top:432.9px;right:257.6px">05.07.16</div><div class="c r" style="top:432.9px;right:198.1px">0,01</div><div class="c r" style="top:432.9px;right:132.6px">5.000,00</div><div class="c" style="top:432.9px;left:775.8px">n/a</div><div class="c" style="top:445.32px;left:5.8px">FLIC Future 09/16</div><div class="c" style="top:445.32px;left:163.1px">W0TO1QY</div><div class="c" style="top:445.32px;left:234px">DFT</div><div class="c" style="top:445.32px;left:289.9px">EDT</div><div class="c" style="top:445.32px;left:330.8px">EUR</div><div class="c r" style="top:445.32px;right:462.7px">13.9.16</div><div class="c r" style="top:445.32px;right:391.4px">0,19</div><div class="c r" style="top:445.32px;right:325.9px">100,53</div><div class="c r" style="top:445.32px;right:257.6px">05.07.16</div><div class="c r" style="top:445.32px;right:198.1px">0,01</div><div class="c r" style="top:445.32px;right:132.6px">5.000,00</div><div class="c" style="top:445.32px;left:775.8px">n/a</div><div class="c" style="top:457.73px;left:5.8px">FEU3 Future 11/16</div><div class="c" style="top:457.73px;left:163.1px">W151LW1</div><div class="c" style="top:457.73px;left:234px">DFT</div><div class="c" style="top:457.73px;left:289.9px">EDT</div><div class="c" style="top:457.73px;left:330.8px">EUR</div><div class="c r" style="top:457.73px;right:462.7px">14.11.16</div><div class="c r" style="top:457.73px;right:391.4px">0,36</div><div class="c r" style="top:457.73px;right:325.9px">100,34</div><div class="c r" style="top:457.73px;right:257.6px">05.07.16</div><div class="c r" style="top:457.73px;right:198.1px">0,01</div><div class="c r" style="top:457.73px;right:132.6px">5.000,00</div><div class="c" style="top:457.73px;left:775.8px">n/a</div><div class="c" style="top:470.15px;left:5.8px">BU2 Future 09/16</div><div class="c" style="top:470.15px;left:163.1px">W116QQZ</div><div class="c" style="top:470.15px;left:234px">DFT</div><div class="c" style="top:470.15px;left:289.9px">CME</div><div class="c" style="top:470.15px;left:330.8px">USD</div><div class="c r" style="top:470.15px;right:462.7px">19.9.16</div><div class="c r" style="top:470.15px;right:391.4px">0,21</div><div class="c r" style="top:470.15px;right:325.9px">99,25</div><div class="c r" style="top:470.15px;right:257.6px">05.07.16</div><div class="c r" style="top:470.15px;right:198.1px">0,01</div><div class="c r" style="top:470.15px;right:132.6px">5.000,00</div><div class="c" style="top:470.15px;left:775.8px">n/a</div><div class="c" style="top:482.56px;left:5.8px">BU5 Future 09/16</div><div class="c" style="top:482.56px;left:163.1px">W116QQV</div><div class="c" style="top:482.56px;left:234px">DFT</div><div class="c" style="top:482.56px;left:289.9px">CME</div><div class="c" style="top:482.56px;left:330.8px">USD</div><div class="c r" style="top:482.56px;right:462.7px">19.9.16</div><div class="c r" style="top:482.56px;right:391.4px">0,21</div><div class="c r" style="top:482.56px;right:325.9px">99,00</div><div class="c r" style="top:482.56px;right:257.6px">05.07.16</div><div class="c r" style="top:482.56px;right:198.1px">0,01</div><div class="c r" style="top:482.56px;right:132.6px">5.000,00</div><div class="c" style="top:482.56px;left:775.8px">n/a</div><div class="c" style="top:494.98px;left:5.8px">BU3 Future 09/16</div><div class="c" style="top:494.98px;left:163.1px">W116QR9</div><div class="c" style="top:494.98px;left:234px">DFT</div><div class="c" style="top:494.98px;left:289.9px">CME</div><div class="c" style="top:494.98px;left:330.8px">USD</div><div class="c r" style="top:494.98px;right:462.7px">19.9.16</div><div class="c r" style="top:494.98px;right:391.4px">0,21</div><div class="c r" style="top:494.98px;right:325.9px">99,18</div><div class="c r" style="top:494.98px;right:257.6px">05.07.16</div><div class="c r" style="top:494.98px;right:198.1px">0,01</div><div class="c r" style="top:494.98px;right:132.6px">5.000,00</div><div class="c" style="top:494.98px;left:775.8px">n/a</div><div class="c" style="top:507.39px;left:5.8px">FEU3 Future 12/18</div><div class="c" style="top:507.39px;left:163.1px">W0GBSQO</div><div class="c" style="top:507.39px;left:234px">DFT</div><div class="c" style="top:507.39px;left:289.9px">EDT</div><div class="c" style="top:507.39px;left:330.8px">EUR</div><div class="c r" style="top:507.39px;right:462.7px">17.12.18</div><div class="c r" style="top:507.39px;right:391.4px">2,45</div><div class="c r" style="top:507.39px;right:325.9px">100,40</div><div class="c r" style="top:507.39px;right:257.6px">05.07.16</div><div class="c r" style="top:507.39px;right:198.1px">0,01</div><div class="c r" style="top:507.39px;right:132.6px">5.000,00</div><div class="c" style="top:507.39px;left:775.8px">n/a</div><div class="c" style="top:519.81px;left:5.8px">FEU3 Future 12/16</div><div class="c" style="top:519.81px;left:163.1px">W07U4WD</div><div class="c" style="top:519.81px;left:234px">DFT</div><div class="c" style="top:519.81px;left:289.9px">EDT</div><div class="c" style="top:519.81px;left:330.8px">EUR</div><div class="c r" style="top:519.81px;right:462.7px">19.12.16</div><div class="c r" style="top:519.81px;right:391.4px">0,45</div><div class="c r" style="top:519.81px;right:325.9px">100,37</div><div class="c r" style="top:519.81px;right:257.6px">05.07.16</div><div class="c r" style="top:519.81px;right:198.1px">0,01</div><div class="c r" style="top:519.81px;right:132.6px">5.000,00</div><div class="c" style="top:519.81px;left:775.8px">n/a</div><div class="c" style="top:532.23px;left:5.8px">FEU3 Future 06/22</div><div class="c" style="top:532.23px;left:163.1px">W166CTH</div><div class="c" style="top:532.23px;left:234px">DFT</div><div class="c" style="top:532.23px;left:289.9px">EDT</div><div class="c" style="top:532.23px;left:330.8px">EUR</div><div class="c r" style="top:532.23px;right:462.7px">13.6.22</div><div class="c r" style="top:532.23px;right:391.4px">5,94</div><div class="c r" style="top:532.23px;right:325.9px">99,96</div><div class="c r" style="top:532.23px;right:257.6px">05.07.16</div><div class="c r" style="top:532.23px;right:198.1px">0,01</div><div class="c r" style="top:532.23px;right:132.6px">5.000,00</div><div class="c" style="top:532.23px;left:775.8px">n/a</div><div class="c" style="top:544.64px;left:5.8px">FEU3 Future 06/18</div><div class="c" style="top:544.64px;left:163.1px">W0CNQA7</div><div class="c" style="top:544.64px;left:234px">DFT</div><div class="c" style="top:544.64px;left:289.9px">EDT</div><div class="c" style="top:544.64px;left:330.8px">EUR</div><div class="c r" style="top:544.64px;right:462.7px">18.6.18</div><div class="c r" style="top:544.64px;right:391.4px">1,95</div><div class="c r" style="top:544.64px;right:325.9px">100,42</div><div class="c r" style="top:544.64px;right:257.6px">05.07.16</div><div class="c r" style="top:544.64px;right:198.1px">0,01</div><div class="c r" style="top:544.64px;right:132.6px">5.000,00</div><div class="c" style="top:544.64px;left:775.8px">n/a</div><div class="c" style="top:557.05px;left:5.8px">FEU3 Future 03/17</div><div class="c" style="top:557.05px;left:163.1px">W08F10W</div><div class="c" style="top:557.05px;left:234px">DFT</div><div class="c" style="top:557.05px;left:289.9px">EDT</div><div class="c" style="top:557.05px;left:330.8px">EUR</div><div class="c r" style="top:557.05px;right:462.7px">13.3.17</div><div class="c r" style="top:557.05px;right:391.4px">0,68</div><div class="c r" style="top:557.05px;right:325.9px">100,38</div><div class="c r" style="top:557.05px;right:257.6px">05.07.16</div><div class="c r" style="top:557.05px;right:198.1px">0,01</div><div class="c r" style="top:557.05px;right:132.6px">5.000,00</div><div class="c" style="top:557.05px;left:775.8px">n/a</div>
<div id="sb"></div>
<div id="thumb"></div>
<div class="a" style="left:889px;top:78.5px;border-left:2.7px solid transparent;border-right:2.7px solid transparent;border-bottom:3.2px solid #444"></div>
<div class="a" style="left:889px;top:558.5px;border-left:2.7px solid transparent;border-right:2.7px solid transparent;border-top:3.2px solid #444"></div>
<div id="tline"></div>
<div id="status"></div>
<div id="statt">Objekte: 43531 von 94043</div>
<div id="lb"></div>
<div id="rb"></div>
<div id="bline"></div>
</body></html>
